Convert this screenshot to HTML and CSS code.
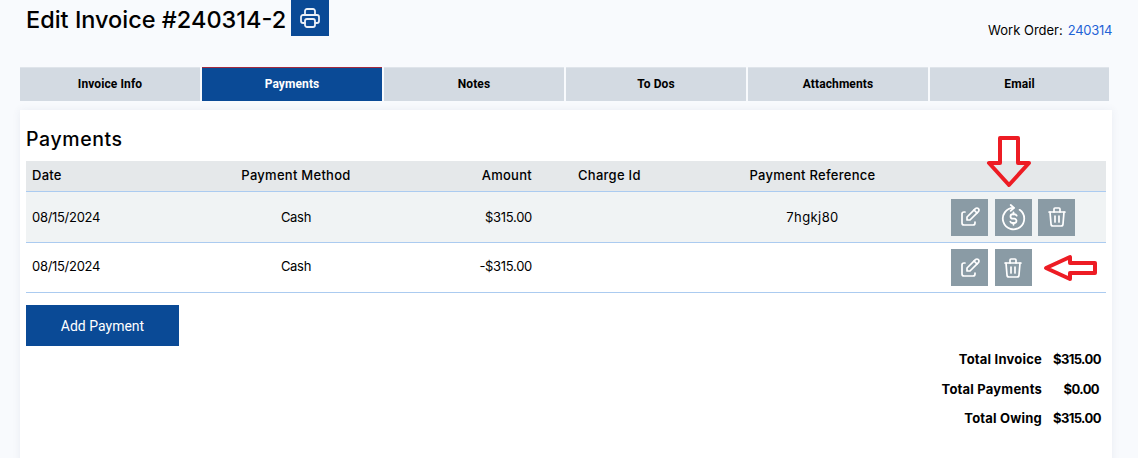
FILE: index.html
```html
<!DOCTYPE html>
<html lang="en">
<head>
<meta charset="utf-8">
<title>Edit Invoice</title>
<link rel="stylesheet" href="styles.css">
</head>
<body>
<svg width="0" height="0" class="defs">
  <symbol id="i-edit" viewBox="0 0 24 24"><path d="M7 7h-1a2 2 0 0 0-2 2v9a2 2 0 0 0 2 2h9a2 2 0 0 0 2-2v-1"/><path d="M20.385 6.585a2.1 2.1 0 0 0-2.97-2.97l-8.415 8.385v3h3l8.385-8.415z"/><path d="M16 5l3 3"/></symbol>
  <symbol id="i-trash" viewBox="0 0 24 24"><path d="M4 7h16"/><path d="M10 11v6"/><path d="M14 11v6"/><path d="M5 7l1 12a2 2 0 0 0 2 2h8a2 2 0 0 0 2-2l1-12"/><path d="M9 7v-3a1 1 0 0 1 1-1h4a1 1 0 0 1 1 1v3"/></symbol>
  <symbol id="i-refund" viewBox="0 0 24 24"><path d="M12 3.500A9.500 9.500 0 1 0 17.450 5.200"/><path d="M9.500 .9l3 2.600-3 2.600"/><path d="M14.800 10.300a2.200 2.200 0 0 0-2-1.200h-1.500a1.950 1.950 0 0 0 0 3.900h1.400a1.950 1.950 0 0 1 0 3.900h-1.500a2.200 2.200 0 0 1-2-1.200"/><path d="M12 7.500v1.600"/><path d="M12 16.900v1.600"/></symbol>
</svg>
<div class="page">
  <header class="top">
    <div class="title-group">
      <h1 class="title">Edit Invoice #240314-2</h1>
      <button class="print-btn" type="button" aria-label="Print">
        <svg class="print-icon" viewBox="0 0 24 24"><path d="M17 17h2a2 2 0 0 0 2-2v-4a2 2 0 0 0-2-2h-14a2 2 0 0 0-2 2v4a2 2 0 0 0 2 2h2"/><path d="M17 9v-4a2 2 0 0 0-2-2h-6a2 2 0 0 0-2 2v4"/><path d="M7 15a2 2 0 0 1 2-2h6a2 2 0 0 1 2 2v4a2 2 0 0 1-2 2h-6a2 2 0 0 1-2-2z"/></svg>
      </button>
    </div>
    <div class="work-order"><span>Work Order:</span> <a href="#" class="wo-link">240314</a></div>
  </header>

  <nav class="tabs">
    <a class="tab" href="#">Invoice Info</a>
    <a class="tab tab-active" href="#">Payments</a>
    <a class="tab" href="#">Notes</a>
    <a class="tab" href="#">To Dos</a>
    <a class="tab" href="#">Attachments</a>
    <a class="tab" href="#">Email</a>
  </nav>

  <main class="panel">
    <h2 class="panel-title">Payments</h2>
    <table class="grid">
      <colgroup>
        <col class="c-date"><col class="c-method"><col class="c-amount"><col class="c-charge"><col class="c-ref"><col class="c-actions">
      </colgroup>
      <thead>
        <tr>
          <th class="left">Date</th>
          <th>Payment Method</th>
          <th class="right">Amount</th>
          <th class="left charge">Charge Id</th>
          <th>Payment Reference</th>
          <th></th>
        </tr>
      </thead>
      <tbody>
        <tr class="shaded">
          <td class="left">08/15/2024</td>
          <td>Cash</td>
          <td class="right">$315.00</td>
          <td></td>
          <td class="ref">7hgkj80</td>
          <td class="actions"><div class="action-row">
            <button class="act" type="button" aria-label="Edit"><svg class="ico"><use href="#i-edit"/></svg></button>
            <button class="act" type="button" aria-label="Refund"><svg class="ico ico-lg"><use href="#i-refund"/></svg></button>
            <button class="act" type="button" aria-label="Delete"><svg class="ico"><use href="#i-trash"/></svg></button>
          </div></td>
        </tr>
        <tr>
          <td class="left">08/15/2024</td>
          <td>Cash</td>
          <td class="right">-$315.00</td>
          <td></td>
          <td></td>
          <td class="actions"><div class="action-row">
            <button class="act" type="button" aria-label="Edit"><svg class="ico"><use href="#i-edit"/></svg></button>
            <button class="act" type="button" aria-label="Delete"><svg class="ico"><use href="#i-trash"/></svg></button>
          </div></td>
        </tr>
      </tbody>
    </table>

    <button class="add-btn" type="button">Add Payment</button>

    <dl class="totals">
      <div class="total-row"><dt>Total Invoice</dt><dd>$315.00</dd></div>
      <div class="total-row"><dt>Total Payments</dt><dd>$0.00</dd></div>
      <div class="total-row"><dt>Total Owing</dt><dd>$315.00</dd></div>
    </dl>
  </main>

  <svg class="arrow arrow-down" viewBox="0 0 46 54"><path d="M14 3H32V28H43L23 50L3 28H14Z"/></svg>
  <svg class="arrow arrow-left" viewBox="0 0 56 30"><path d="M3 15L27 4V10H52V20H27V26Z"/></svg>
</div>
</body>
</html>
```
FILE: styles.css
```css
* { box-sizing: border-box; }
html, body { margin: 0; height: 100%; }
body {
  background: #f8fafd;
  color: #000;
  font-family: "Inter", "Liberation Sans", sans-serif;
  overflow: hidden;
}
.defs { position: absolute; }
.page { position: relative; height: 458px; overflow: hidden; }

.top {
  display: flex;
  justify-content: space-between;
  padding: 0 26px;
  height: 67px;
}
.title-group { display: flex; align-items: flex-start; gap: 5px; }
.title {
  margin: 0;
  font-size: 23.500px;
  font-weight: 500;
  line-height: 40px;
}
.print-btn {
  width: 38px;
  height: 36px;
  padding: 0;
  border: 0;
  background: #0a4a96;
  display: flex;
  align-items: center;
  justify-content: center;
}
.print-icon {
  width: 24px;
  height: 24px;
  fill: none;
  stroke: #e9eff7;
  stroke-width: 1.800;
  stroke-linecap: round;
  stroke-linejoin: round;
}
.work-order {
  margin-top: 21px;
  font-size: 13px;
  line-height: 18px;
  display: flex;
  gap: 5px;
}
.wo-link { color: #1f63d6; text-decoration: none; letter-spacing: -0.3px; }

.tabs {
  display: grid;
  grid-template-columns: repeat(5, 180px) 179px;
  gap: 2px;
  margin-left: 20px;
}
.tab {
  height: 34px;
  background: #d3dae2;
  border-top: 1px solid #dfe4ea;
  color: #000;
  font: 700 12px/33px "Roboto", sans-serif;
  letter-spacing: 0.1px;
  text-align: center;
  text-decoration: none;
}
.tab-active {
  background: #0a4a96;
  border-top: 1px solid #a32a3f;
  color: #fff;
}

.panel {
  margin: 9px 26px 0 20px;
  height: 360px;
  background: #fff;
  padding: 0 6px;
  box-shadow: 0 0 8px rgba(60, 80, 120, 0.08);
}
.panel-title {
  margin: 0;
  padding-top: 17px;
  font-size: 19.500px;
  font-weight: 500;
  line-height: 24px;
  letter-spacing: 0.6px;
  height: 51px;
}

.grid {
  width: 1080px;
  table-layout: fixed;
  border-collapse: separate;
  border-spacing: 0;
  font-size: 13px;
}
.c-date { width: 160px; }
.c-method { width: 220px; }
.c-amount { width: 132px; }
.c-charge { width: 162px; }
.c-ref { width: 225px; }
.grid th {
  height: 31px;
  padding: 0 6px 2px;
  font-weight: 500;
  letter-spacing: 0.27px;
  text-align: center;
  background: #e5e8ea;
  border-bottom: 1px solid #abcbf0;
}
.grid td {
  height: 51px;
  padding: 0 6px;
  letter-spacing: -0.3px;
  text-align: center;
  border-bottom: 1px solid #abcbf0;
}
.grid tbody tr:last-child td { height: 50px; padding-bottom: 3px; }
.grid .left { text-align: left; }
.grid .right { text-align: right; }
.grid .charge { padding-left: 40px; }
.grid .ref { letter-spacing: 0.4px; }
.shaded td { background: #f0f3f4; }
.grid .actions,
.grid tbody tr:last-child .actions { padding: 0 0 0 26px; }
.action-row { display: flex; gap: 6.500px; }
.act {
  width: 37px;
  height: 37px;
  padding: 0;
  border: 0;
  background: #8a9ba5;
  display: flex;
  align-items: center;
  justify-content: center;
}
.ico {
  width: 24px;
  height: 24px;
  fill: none;
  stroke: #fff;
  stroke-width: 1.700;
  stroke-linecap: round;
  stroke-linejoin: round;
}
.ico-lg { width: 27px; height: 27px; stroke-width: 1.600; }

.add-btn {
  display: block;
  margin-top: 12px;
  width: 153px;
  height: 41px;
  border: 0;
  background: #0a4a96;
  color: #fff;
  font: 400 14px "Roboto", sans-serif;
}

.totals {
  margin: 0;
  padding-right: 7px;
  font-size: 13px;
  font-weight: 700;
  letter-spacing: 0.2px;
}
.total-row {
  display: flex;
  justify-content: flex-end;
  line-height: 29.500px;
  gap: 11px;
}
.total-row:first-child { margin-top: -1px; }
.total-row dt { margin: 0; }
.total-row dd { margin: 0; width: 46px; letter-spacing: -0.6px; text-align: right; white-space: nowrap; }

.arrow {
  position: absolute;
  fill: none;
  stroke: #ed1c24;
  stroke-width: 4;
  stroke-linejoin: round;
}
.arrow-down { left: 986px; top: 135px; width: 46px; height: 54px; }
.arrow-left { left: 1043px; top: 253px; width: 56px; height: 30px; }
```
